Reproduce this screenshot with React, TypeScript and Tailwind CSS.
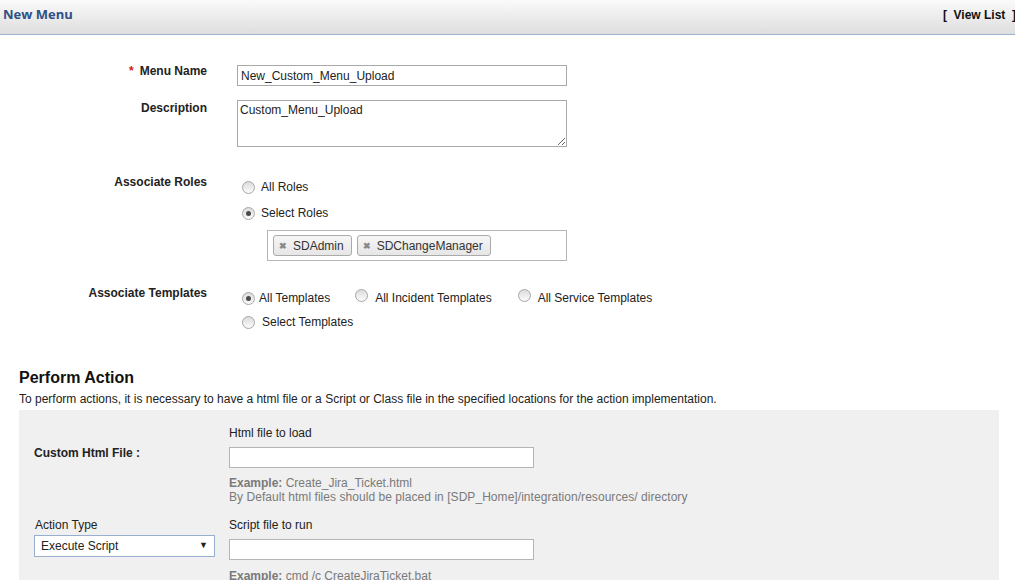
import React from "react";

function Radio({ checked }: { checked?: boolean }) {
  return (
    <span className="relative inline-flex h-[13px] w-[13px] shrink-0 items-center justify-center rounded-full border border-[#a6a6a6] bg-gradient-to-b from-[#dcdcdc] to-[#fbfbfb]">
      {checked && <span className="h-[5px] w-[5px] rounded-full bg-[#4a4a4a]" />}
    </span>
  );
}

function Tag({ label }: { label: string }) {
  return (
    <span className="flex h-[21px] items-center gap-[6px] rounded-[3px] border border-[#aaaaaa] bg-gradient-to-b from-[#f6f6f6] to-[#e6e6e6] pl-[5px] pr-[7px] text-[12px] text-[#333]">
      <span className="mt-[2px] text-[9px] font-bold leading-none text-[#888]">✖</span>
      <span>{label}</span>
    </span>
  );
}

export default function App() {
  return (
    <div
      className="h-[580px] w-[1015px] overflow-hidden bg-white text-[12px] text-[#222]"
      style={{ fontFamily: '"Liberation Sans", Arial, sans-serif' }}
    >
      {/* header */}
      <div className="flex h-[35px] items-center justify-between border-b border-[#9cb4d2] bg-gradient-to-b from-[#fafafa] to-[#dedede] pb-[4px] pl-[3px]">
        <span
          className="text-[13px] font-bold text-[#2f5185]"
          style={{ fontFamily: '"Open Sans", sans-serif' }}
        >
          New Menu
        </span>
        <span className="-mr-[1px] text-[12px] font-bold text-[#111]">
          [&nbsp;&nbsp;View List&nbsp;&nbsp;]
        </span>
      </div>

      {/* form */}
      <div className="flex flex-col pt-[30px]">
        <div className="flex">
          <div className="-mt-[3px] w-[207px] text-right font-bold">
            <span className="mr-[6px] text-[#d02020]">*</span>Menu Name
          </div>
          <div className="ml-[30px]">
            <div className="flex h-[21px] w-[330px] items-center border border-[#a9a9a9] px-[3px] text-[12px]">
              New_Custom_Menu_Upload
            </div>
          </div>
        </div>

        <div className="mt-[14px] flex">
          <div className="-mt-[1px] w-[207px] text-right font-bold">Description</div>
          <div className="ml-[30px]">
            <textarea
              readOnly
              defaultValue="Custom_Menu_Upload"
              className="block h-[47px] w-[330px] resize border border-[#a9a9a9] px-[2px] py-[2px] text-[12px] leading-[15px] outline-none"
              style={{ fontFamily: '"Liberation Sans", Arial, sans-serif' }}
            />
          </div>
        </div>

        <div className="mt-[26px] flex">
          <div className="w-[207px] text-right font-bold">Associate Roles</div>
          <div className="ml-[35px] flex flex-col">
            <div className="mt-[5px] flex items-center gap-[6px]">
              <Radio />
              <span>All Roles</span>
            </div>
            <div className="mt-[8px] flex items-center gap-[6px]">
              <Radio checked />
              <span>Select Roles</span>
            </div>
            <div className="ml-[25px] mt-[8px] flex h-[31px] w-[300px] items-center gap-[5px] border border-[#b5b5b5] px-[5px]">
              <Tag label="SDAdmin" />
              <Tag label="SDChangeManager" />
            </div>
          </div>
        </div>

        <div className="mt-[23px] flex">
          <div className="w-[207px] text-right font-bold">Associate Templates</div>
          <div className="ml-[35px] flex flex-col">
            <div className="mt-[5px] flex items-center">
              <Radio checked />
              <span className="ml-[4px]">All Templates</span>
              <span className="ml-[25px]">
                <Radio />
              </span>
              <span className="ml-[7px]">All Incident Templates</span>
              <span className="ml-[26px]">
                <Radio />
              </span>
              <span className="ml-[7px]">All Service Templates</span>
            </div>
            <div className="mt-[6px] flex items-center gap-[7px]">
              <Radio />
              <span>Select Templates</span>
            </div>
          </div>
        </div>
      </div>

      {/* perform action */}
      <div className="mt-[38px] pl-[19px]">
        <div className="text-[16px] font-bold leading-[18px] text-[#111]">Perform Action</div>
        <div className="mt-[5px] text-[12px] leading-[14px] text-[#222]">
          To perform actions, it is necessary to have a html file or a Script or Class file in the specified locations for the action implementation.
        </div>

        <div className="mt-[4px] w-[980px] bg-[#f0f0f0] pb-[20px] pl-[15px] pt-[16px]">
          <div className="flex">
            <div className="w-[195px] pt-[20px] font-bold leading-[14px] text-[#222]">
              Custom Html File :
            </div>
            <div className="flex flex-col">
              <span className="leading-[14px]">Html file to load</span>
              <div className="mt-[7px] h-[21px] w-[305px] border border-[#b5b5b5] bg-white" />
              <span className="mt-[8px] leading-[14px] text-[#7a7a7a]">
                <b>Example:</b> Create_Jira_Ticket.html
              </span>
              <span className="leading-[14px] tracking-[0.05px] text-[#7a7a7a]">
                By Default html files should be placed in [SDP_Home]/integration/resources/ directory
              </span>
            </div>
          </div>

          <div className="mt-[14px] flex">
            <div className="flex w-[195px] flex-col">
              <span className="pl-[1px] leading-[14px]">Action Type</span>
              <div className="mt-[3px] flex h-[22px] w-[181px] items-center justify-between border border-[#9aaed0] bg-white pl-[6px] pr-[6px]">
                <span>Execute Script</span>
                <span className="text-[9px] text-[#222]">▼</span>
              </div>
            </div>
            <div className="flex flex-col">
              <span className="leading-[14px]">Script file to run</span>
              <div className="mt-[7px] h-[21px] w-[305px] border border-[#b5b5b5] bg-white" />
              <span className="mt-[9px] leading-[14px] text-[#7a7a7a]">
                <b>Example:</b> cmd /c CreateJiraTicket.bat
              </span>
            </div>
          </div>
        </div>
      </div>
    </div>
  );
}
